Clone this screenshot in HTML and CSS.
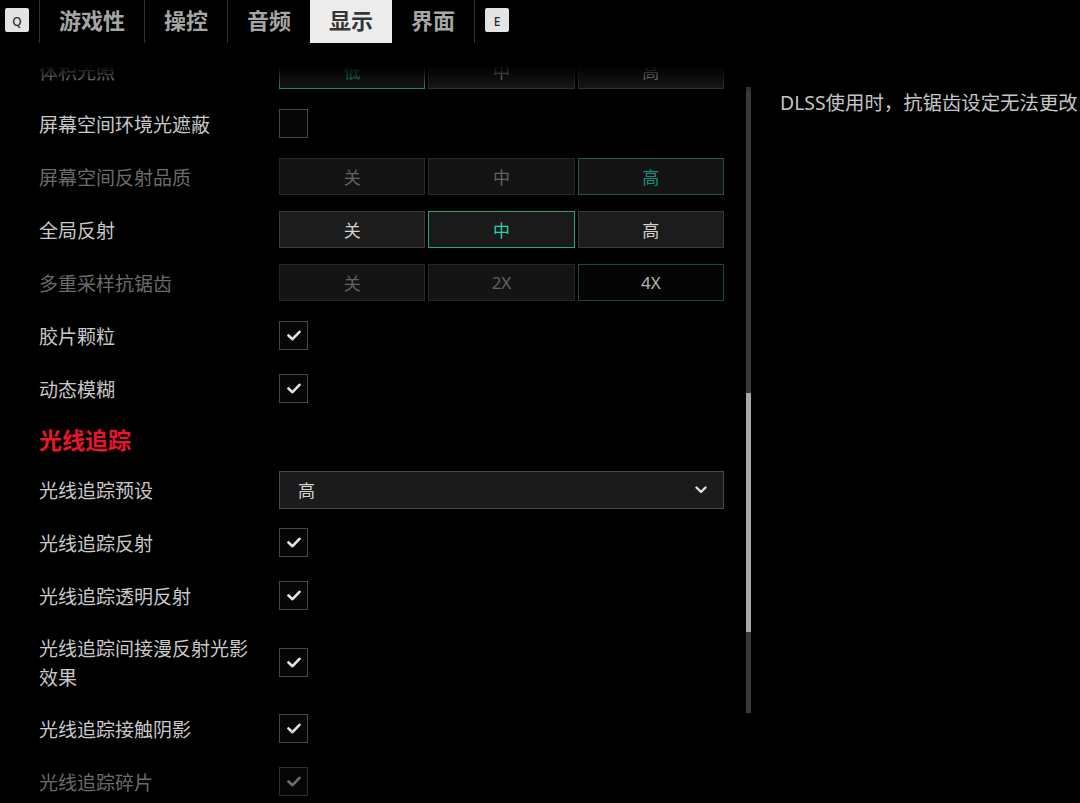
FILE: index.html
```html
<!DOCTYPE html>
<html lang="zh-CN">
<head>
<meta charset="utf-8">
<title>显示设置</title>
<link rel="stylesheet" href="styles.css">
</head>
<body>
<div class="app">
  <header class="tabbar">
    <span class="key">Q</span>
    <span class="divider"></span>
    <span class="tab">游戏性</span>
    <span class="divider"></span>
    <span class="tab">操控</span>
    <span class="divider"></span>
    <span class="tab">音频</span>
    <span class="tab active">显示</span>
    <span class="tab">界面</span>
    <span class="divider"></span>
    <span class="key">E</span>
  </header>

  <main class="content">
    <div class="fade"></div>
    <section class="settings">
      <div class="row">
        <div class="label">体积光照</div>
        <div class="seg">
          <div class="opt sel">低</div>
          <div class="opt">中</div>
          <div class="opt">高</div>
        </div>
      </div>
      <div class="row">
        <div class="label">屏幕空间环境光遮蔽</div>
        <div class="control"><span class="check"></span></div>
      </div>
      <div class="row disabled">
        <div class="label">屏幕空间反射品质</div>
        <div class="seg">
          <div class="opt">关</div>
          <div class="opt">中</div>
          <div class="opt sel">高</div>
        </div>
      </div>
      <div class="row">
        <div class="label">全局反射</div>
        <div class="seg">
          <div class="opt">关</div>
          <div class="opt sel">中</div>
          <div class="opt">高</div>
        </div>
      </div>
      <div class="row disabled">
        <div class="label">多重采样抗锯齿</div>
        <div class="seg">
          <div class="opt">关</div>
          <div class="opt">2X</div>
          <div class="opt cur">4X</div>
        </div>
      </div>
      <div class="row">
        <div class="label">胶片颗粒</div>
        <div class="control"><span class="check on"><svg viewBox="0 0 14 11" width="14" height="11"><path d="M1.5 5.5 L5.5 9.2 L12.5 1.8" fill="none" stroke="currentColor" stroke-width="2.6" stroke-linecap="round" stroke-linejoin="round"/></svg></span></div>
      </div>
      <div class="row">
        <div class="label">动态模糊</div>
        <div class="control"><span class="check on"><svg viewBox="0 0 14 11" width="14" height="11"><path d="M1.5 5.5 L5.5 9.2 L12.5 1.8" fill="none" stroke="currentColor" stroke-width="2.6" stroke-linecap="round" stroke-linejoin="round"/></svg></span></div>
      </div>
      <div class="section-title">光线追踪</div>
      <div class="row">
        <div class="label">光线追踪预设</div>
        <div class="select">
          <span>高</span>
          <svg class="chev" viewBox="0 0 12 8" width="12" height="8"><path d="M1.5 1.5 L6 6 L10.5 1.5" fill="none" stroke="currentColor" stroke-width="2.4" stroke-linecap="round" stroke-linejoin="round"/></svg>
        </div>
      </div>
      <div class="row">
        <div class="label">光线追踪反射</div>
        <div class="control"><span class="check on"><svg viewBox="0 0 14 11" width="14" height="11"><path d="M1.5 5.5 L5.5 9.2 L12.5 1.8" fill="none" stroke="currentColor" stroke-width="2.6" stroke-linecap="round" stroke-linejoin="round"/></svg></span></div>
      </div>
      <div class="row">
        <div class="label">光线追踪透明反射</div>
        <div class="control"><span class="check on"><svg viewBox="0 0 14 11" width="14" height="11"><path d="M1.5 5.5 L5.5 9.2 L12.5 1.8" fill="none" stroke="currentColor" stroke-width="2.6" stroke-linecap="round" stroke-linejoin="round"/></svg></span></div>
      </div>
      <div class="row">
        <div class="label">光线追踪间接漫反射光影效果</div>
        <div class="control"><span class="check on"><svg viewBox="0 0 14 11" width="14" height="11"><path d="M1.5 5.5 L5.5 9.2 L12.5 1.8" fill="none" stroke="currentColor" stroke-width="2.6" stroke-linecap="round" stroke-linejoin="round"/></svg></span></div>
      </div>
      <div class="row">
        <div class="label">光线追踪接触阴影</div>
        <div class="control"><span class="check on"><svg viewBox="0 0 14 11" width="14" height="11"><path d="M1.5 5.5 L5.5 9.2 L12.5 1.8" fill="none" stroke="currentColor" stroke-width="2.6" stroke-linecap="round" stroke-linejoin="round"/></svg></span></div>
      </div>
      <div class="row disabled">
        <div class="label">光线追踪碎片</div>
        <div class="control"><span class="check on"><svg viewBox="0 0 14 11" width="14" height="11"><path d="M1.5 5.5 L5.5 9.2 L12.5 1.8" fill="none" stroke="currentColor" stroke-width="2.6" stroke-linecap="round" stroke-linejoin="round"/></svg></span></div>
      </div>
    </section>
    <div class="scrollbar"><div class="thumb"></div></div>
    <aside class="info">DLSS使用时，抗锯齿设定无法更改</aside>
  </main>
</div>
</body>
</html>
```

FILE: styles.css
```css
* { box-sizing: border-box; }

html, body {
  margin: 0;
  padding: 0;
  background: #000;
  overflow: hidden;
}

body {
  font-family: "Noto Sans", "Noto Sans CJK SC", sans-serif;
  color: #c8c8c8;
  width: 1080px;
  height: 803px;
}

.app {
  width: 1080px;
  height: 803px;
  display: flex;
  flex-direction: column;
}

/* ---------- tab bar ---------- */
.tabbar {
  height: 44px;
  flex: 0 0 44px;
  display: flex;
  align-items: stretch;
  padding-left: 5px;
  padding-bottom: 1px;
  background: #000;
  position: relative;
  z-index: 2;
}

.key {
  align-self: flex-start;
  margin-top: 8px;
  width: 24px;
  height: 24px;
  background: #e4e4e4;
  color: #2a2a2a;
  border-radius: 2px;
  font-family: "Noto Sans", sans-serif;
  font-size: 12px;
  font-weight: 500;
  display: flex;
  align-items: center;
  justify-content: center;
  padding-top: 3px;
}

.tabbar .key:first-child { margin-right: 10px; }
.tabbar .divider + .key { margin-left: 10px; }

.divider {
  width: 1px;
  background: #333;
}

.tab {
  display: flex;
  align-items: center;
  padding: 0 19px 5px;
  font-family: "Noto Sans CJK SC", sans-serif;
  font-size: 22px;
  font-weight: 700;
  color: #a6a6a6;
}

.tab.active {
  background: #ececec;
  color: #363636;
}

/* ---------- content ---------- */
.content {
  flex: 1;
  display: flex;
  align-items: flex-start;
  position: relative;
  overflow: hidden;
}

.fade {
  position: absolute;
  left: 0;
  top: 0;
  width: 760px;
  height: 50px;
  background: linear-gradient(to bottom, #000 0, #000 22px, rgba(0,0,0,0.55) 34px, rgba(0,0,0,0) 50px);
  z-index: 1;
  pointer-events: none;
}

.settings {
  width: 746px;
  flex: 0 0 746px;
  padding-left: 39px;
}

.row {
  display: flex;
  align-items: center;
  min-height: 53px;
}

.label {
  width: 225px;
  margin-right: 15px;
  flex: 0 0 225px;
  padding: 11px 0;
  font-family: "Noto Sans CJK SC", sans-serif;
  font-size: 19px;
  line-height: 29px;
  color: #c9c9c9;
}

.row.disabled .label { color: #6b6b6b; }

.section-title {
  height: 48px;
  display: flex;
  align-items: center;
  font-family: "Noto Sans CJK SC", sans-serif;
  font-size: 23px;
  font-weight: 700;
  color: #e8152c;
}

/* segmented buttons */
.seg {
  width: 445px;
  display: grid;
  grid-template-columns: repeat(3, 1fr);
  gap: 3px;
}

.opt {
  height: 37px;
  display: flex;
  align-items: center;
  justify-content: center;
  background: #1c1c1c;
  border: 1px solid #3a3a3a;
  font-family: "Noto Sans", "Noto Sans CJK SC", sans-serif;
  font-size: 17px;
  color: #d2d2d2;
}

.opt.sel {
  border-color: #26a488;
  color: #2bcfa9;
  background: #1a1a1a;
}

.row.disabled .opt {
  background: #141414;
  border-color: #272727;
  color: #626262;
}

.row.disabled .opt.sel {
  border-color: #1b5a4c;
  color: #1f8d75;
}

.row.disabled .opt.cur {
  background: #050505;
  border-color: #1d4a40;
  color: #b4b4b4;
}

/* checkbox */
.control {
  display: flex;
  align-items: center;
}

.check {
  width: 29px;
  height: 29px;
  border: 1px solid #474747;
  background: #060606;
  display: flex;
  align-items: center;
  justify-content: center;
  color: #e2e2e2;
}

.row.disabled .check {
  border-color: #2e2e2e;
  color: #6e6e6e;
}

/* dropdown */
.select {
  width: 445px;
  height: 38px;
  background: #1b1b1b;
  border: 1px solid #484848;
  display: flex;
  align-items: center;
  justify-content: space-between;
  padding: 0 16px 0 18px;
  font-family: "Noto Sans CJK SC", sans-serif;
  font-size: 17px;
  color: #d6d6d6;
}

.chev { color: #e0e0e0; }

/* scrollbar */
.scrollbar {
  width: 5px;
  flex: 0 0 5px;
  height: 626px;
  margin-top: 43px;
  background: #3a3a3a;
}

.thumb {
  margin-top: 306px;
  height: 239px;
  background: #a9a9a9;
}

/* info panel */
.info {
  padding-left: 29px;
  padding-top: 44px;
  font-family: "Noto Sans", "Noto Sans CJK SC", sans-serif;
  font-size: 19.4px;
  line-height: 29px;
  color: #c6c6c6;
  white-space: nowrap;
}
```
